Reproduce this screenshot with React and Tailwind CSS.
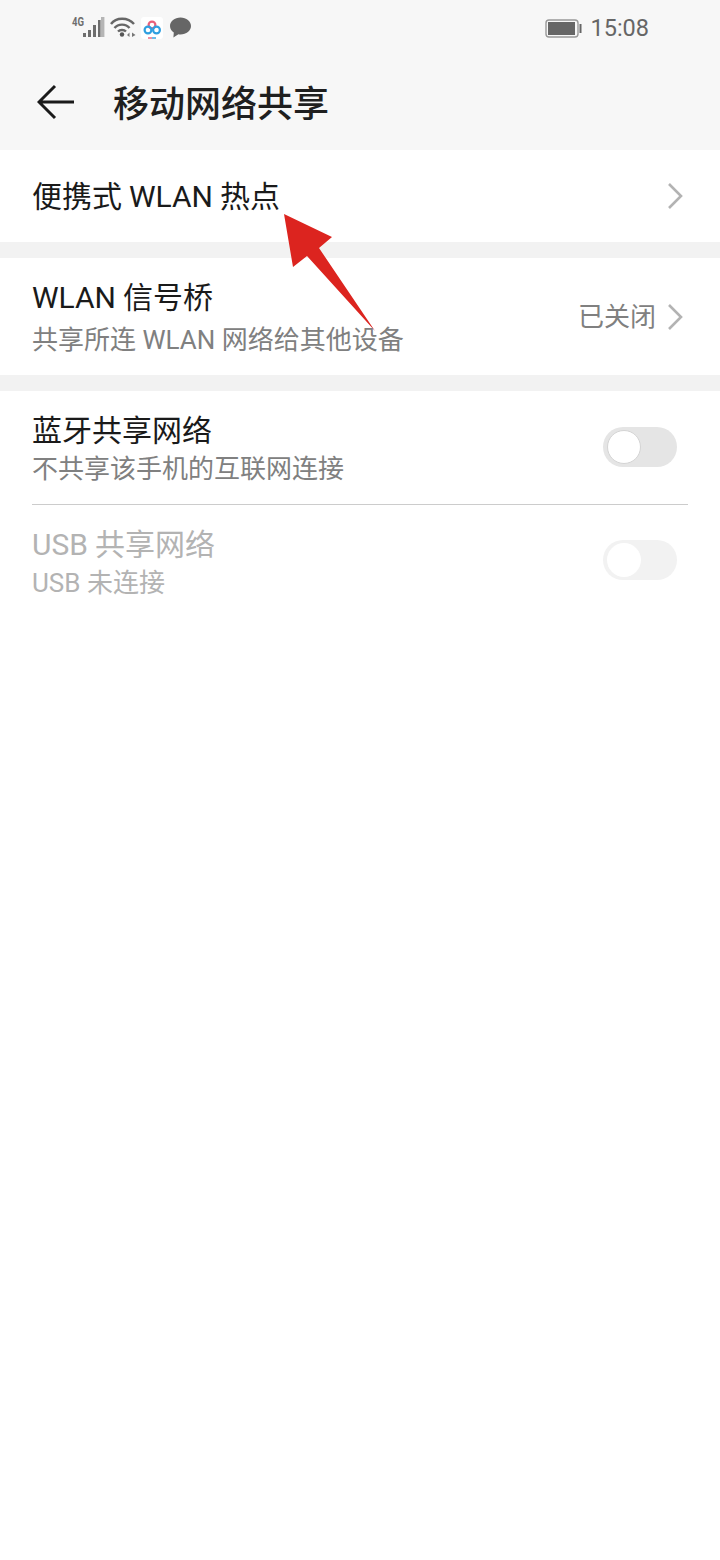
import React from "react";

const font = { fontFamily: '"Roboto", "Noto Sans CJK SC", sans-serif' };

const Chevron = () => (
  <svg width="18" height="28" viewBox="0 0 18 28" fill="none" stroke="#b3b3b3" strokeWidth="2.6">
    <path d="M3 2 L15 14 L3 26" />
  </svg>
);

const Toggle = ({ disabled, className = "" }) => (
  <div className={`w-[74px] h-10 rounded-full pl-1 pt-[3px] flex ${disabled ? "bg-[#f2f2f2]" : "bg-[#e5e5e5]"} ${className}`}>
    <div className={`w-[34px] h-[34px] rounded-full bg-white ${disabled ? "" : "border border-[#d4d4d4]"}`} />
  </div>
);

const StatusIcons = () => (
  <div className="flex items-start pl-[71px] pt-[17px]">
    <svg width="34" height="21" viewBox="0 0 34 21" fill="#6e6e6e">
      <text x="1" y="9" fontSize="12" fontWeight="700" fontFamily="Roboto, sans-serif" textLength="12" lengthAdjust="spacingAndGlyphs">4G</text>
      <rect x="12" y="16" width="3" height="4" />
      <rect x="17" y="13" width="3" height="7" />
      <rect x="22" y="8" width="3" height="12" />
      <rect x="27" y="3" width="2.6" height="17" />
      <rect x="30" y="0" width="3.4" height="20" fill="#b5b5b5" />
    </svg>
    <svg className="ml-[5px]" width="26" height="21" viewBox="0 0 26 21" fill="none" stroke="#666" strokeWidth="2.4">
      <path d="M1 7 C6 0 18 0 24 7" />
      <path d="M4.5 11 C8 6.5 16 6.5 19.5 11" />
      <path d="M8 14.5 C10 12.5 14 12.5 16 14.5" />
      <circle cx="12" cy="17.5" r="2.2" fill="#555" stroke="none" />
      <path d="M19.5 15.5 L17 18 L19.5 20 Z M22 15.5 L25.5 18 L22 20 Z" fill="#777" stroke="none" />
    </svg>
    <div className="ml-[5px] w-[22px] h-[22px] bg-white rounded-[3px] flex items-center justify-center">
      <svg width="22" height="22" viewBox="0 0 22 22" fill="none" strokeWidth="2.2">
        <circle cx="11" cy="8" r="3.4" stroke="#e8607a" />
        <circle cx="7" cy="13" r="3.4" stroke="#2f9fe0" />
        <circle cx="15.5" cy="13" r="3.4" stroke="#2f9fe0" />
        <path d="M7 21 H11" stroke="#e8607a" strokeWidth="1.4" />
        <path d="M11 21 H15" stroke="#2f9fe0" strokeWidth="1.4" />
      </svg>
    </div>
    <svg className="ml-[7px]" width="21" height="21" viewBox="0 0 21 21" fill="#666">
      <path d="M10.5 0.5 C4.7 0.5 0 4.2 0 9 C0 11.8 1.5 14 3.8 15.5 L3.4 20.5 L8.4 17.3 C9.1 17.4 9.8 17.5 10.5 17.5 C16.3 17.5 21 13.8 21 9 C21 4.2 16.3 0.5 10.5 0.5 Z" />
    </svg>
  </div>
);

const Row = ({ title, sub, right, className = "", titleClass = "text-[#1a1a1a]", subClass = "text-[#808080]", subGap = "", textPad = "" }) => (
  <div className={`flex items-center justify-between bg-white pl-8 ${className}`}>
    <div className={`flex flex-col ${textPad}`}>
      <div className={`text-[30px] leading-[36px] [word-spacing:-0.5px] ${titleClass}`}>{title}</div>
      {sub && <div className={`text-[26px] leading-[34px] ${subGap} ${subClass}`}>{sub}</div>}
    </div>
    {right}
  </div>
);

export default function App() {
  return (
    <div className="relative w-[720px] h-[1560px] bg-white overflow-hidden" style={font}>
      <div className="h-[150px] bg-[#f7f7f7] flex flex-col">
        <div className="h-[54px] flex justify-between">
          <StatusIcons />
          <div className="flex items-center pr-[71px] pt-[3px]">
            <svg width="37" height="20" viewBox="0 0 37 20" fill="none">
              <rect x="1" y="1" width="32" height="17" rx="3" stroke="#999" strokeWidth="1.4" />
              <rect x="3" y="3" width="27" height="13" fill="#666" />
              <rect x="34.5" y="5" width="2" height="9" fill="#666" />
            </svg>
            <span className="ml-[8px] text-[23.5px] leading-none text-[#666]">15:08</span>
          </div>
        </div>
        <div className="flex items-center h-[96px] pl-[37px]">
          <svg width="38" height="36" viewBox="0 0 38 36" fill="none" stroke="#1a1a1a" strokeWidth="3">
            <path d="M18 2 L2 18 L18 34 M2 18 H37" />
          </svg>
          <h1 className="ml-[38px] mt-[5px] text-[36px] leading-none font-medium text-[#1f1f1f]">移动网络共享</h1>
        </div>
      </div>

      <Row title="便携式 WLAN 热点" className="h-[92px] pr-[36px]" textPad="pt-[2px]" right={<Chevron />} />
      <div className="h-4 bg-[#f2f2f2]" />
      <Row
        title="WLAN 信号桥"
        sub="共享所连 WLAN 网络给其他设备"
        className="h-[117px] pr-[36px]"
        subGap="mt-[7px]"
        textPad="pt-[3px]"
        right={
          <div className="flex items-center gap-[10px]">
            <span className="text-[26px] text-[#808080] pt-[1px]">已关闭</span>
            <Chevron />
          </div>
        }
      />
      <div className="h-4 bg-[#f2f2f2]" />
      <Row
        title="蓝牙共享网络"
        sub="不共享该手机的互联网连接"
        className="h-[113px] pr-[43px]"
        subGap="mt-[3px]"
        textPad="pt-[4px]"
        right={<Toggle className="mb-[2px]" />}
      />
      <div className="mx-8 h-px bg-[#cccccc]" />
      <Row
        title="USB 共享网络"
        sub="USB 未连接"
        className="h-[113px] pr-[43px]"
        titleClass="text-[#b3b3b3]"
        subClass="text-[#b3b3b3]"
        subGap="mt-[3px]"
        textPad="pt-[3px]"
        right={<Toggle disabled className="mb-1" />}
      />

      {/* red annotation arrow laid over the list */}
      <svg className="absolute left-0 top-0 pointer-events-none" width="720" height="400" viewBox="0 0 720 400">
        <polygon points="284,214 332,237 319,248 375,331 307,256 293,267" fill="#dc241f" />
      </svg>
    </div>
  );
}
